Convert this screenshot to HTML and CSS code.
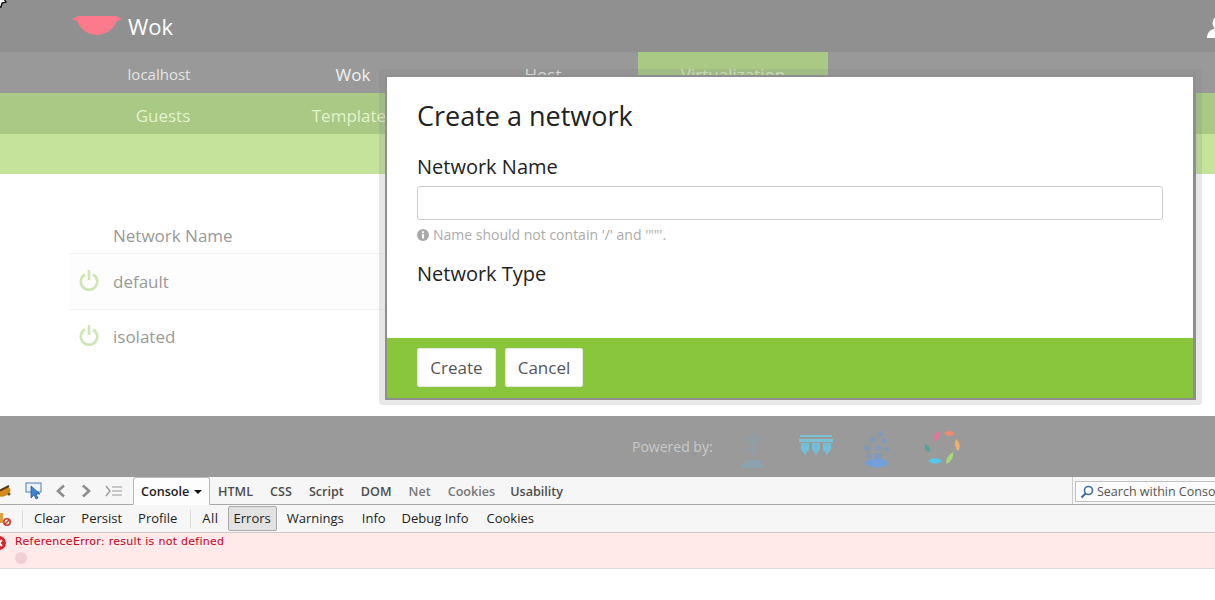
FILE: index.html
```html
<!DOCTYPE html>
<html lang="en">
<head>
<meta charset="utf-8">
<title>Wok</title>
<link rel="stylesheet" href="styles.css">
</head>
<body>
<div class="app">
  <header class="topbar">
    <svg class="logo" width="50" height="20" viewBox="0 0 50 20"><path d="M0 3 L6 0 H44 L50 3 L45 5 C41 14 33 19 25 19 C17 19 9 14 5 5 Z" fill="#fd7a8c"/></svg>
    <span class="brand">Wok</span>
    <svg class="user" width="30" height="24" viewBox="0 0 30 24"><circle cx="14" cy="8" r="7.5" fill="#fff"/><path d="M1 23 C1 16 6 13 14 13 C22 13 27 16 27 23 Z" fill="#fff"/></svg>
  </header>
  <nav class="nav1">
    <a class="n1">localhost</a><a class="n1 bright">Wok</a><a class="n1 wide">Host</a><a class="n1 active">Virtualization</a>
  </nav>
  <nav class="nav2">
    <a class="n2">Guests</a><a class="n2">Templates</a>
  </nav>
  <div class="band"></div>
  <main class="content">
    <div class="thead">Network Name</div>
    <div class="trow">
      <svg class="power" width="20" height="22" viewBox="0 0 20 22"><path d="M6 5.5 A8.2 8.2 0 1 0 14 5.5" fill="none" stroke="#cfe5b4" stroke-width="2.6"/><path d="M10 1 V11" stroke="#cfe5b4" stroke-width="2.6"/></svg>
      <span>default</span>
    </div>
    <div class="trow last">
      <svg class="power" width="20" height="22" viewBox="0 0 20 22"><path d="M6 5.5 A8.2 8.2 0 1 0 14 5.5" fill="none" stroke="#cfe5b4" stroke-width="2.6"/><path d="M10 1 V11" stroke="#cfe5b4" stroke-width="2.6"/></svg>
      <span>isolated</span>
    </div>
  </main>
  <footer class="foot">
    <span class="powered">Powered by:</span>
    <svg class="flogo l1" width="28" height="40" viewBox="0 0 28 40"><g fill="none" stroke="#8ba3ab" stroke-width="2.4"><path d="M14 2 V28 M7 7 L14 15 L21 7 M9 20 H19"/><path d="M3 37 H25 M6 33 H22" stroke="#85a6b8" stroke-width="3.4"/></g></svg>
    <svg class="flogo l2" width="36" height="22" viewBox="0 0 36 22"><path d="M2 1 H34 V3 H2 Z M1 5 H35 V8 H1 Z" fill="#79c1d4"/><path d="M3 9 H11 V15 L7 21 L3 15 Z M14 9 H22 V15 L18 21 L14 15 Z M25 9 H33 V15 L29 21 L25 15 Z" fill="#6fc0d8"/></svg>
    <svg class="flogo l3" width="30" height="38" viewBox="0 0 30 38"><g fill="#8199bd"><circle cx="20" cy="4" r="3"/><circle cx="12" cy="10" r="3"/><circle cx="23" cy="11" r="3"/><circle cx="6" cy="18" r="3"/><circle cx="17" cy="18" r="3"/><circle cx="26" cy="19" r="2.4"/><circle cx="8" cy="26" r="2.4"/><rect x="13" y="23" width="8" height="8"/><ellipse cx="16" cy="33" rx="11" ry="4.5" fill="#6f9fe0"/></g></svg>
    <svg class="flogo l4" width="36" height="36" viewBox="0 0 36 36"><path d="M15 1 C16 5 14 9 11 12 C9 8 11 3 15 1 Z" fill="#ef6f9d"/><path d="M20 3 C24 0 28 1 31 3 C28 7 23 7 20 3 Z" fill="#ee8a70"/><path d="M32 9 C36 12 37 17 34 21 C31 18 30 13 32 9 Z" fill="#eeb06a"/><path d="M29 22 C30 27 27 32 22 34 C22 29 24 25 29 22 Z" fill="#a5d877"/><path d="M18 31 C14 35 8 34 4 31 C8 27 14 27 18 31 Z" fill="#58c6e6"/><path d="M1 14 C5 15 7 19 6 22 C2 21 0 18 1 14 Z" fill="#4fa89e"/></svg>
  </footer>
</div>

<section class="modal">
  <div class="modal-inner">
    <div class="modal-body">
      <h1>Create a network</h1>
      <label class="lbl">Network Name</label>
      <div class="field"></div>
      <p class="hint"><svg width="12" height="12" viewBox="0 0 12 12"><circle cx="6" cy="6" r="6" fill="#a9a9a9"/><rect x="5" y="5" width="2" height="4.5" fill="#fff"/><rect x="5" y="2.3" width="2" height="1.7" fill="#fff"/></svg>Name should not contain '/' and '""'.</p>
      <label class="lbl type">Network Type</label>
    </div>
    <div class="modal-foot">
      <button class="btn">Create</button>
      <button class="btn">Cancel</button>
    </div>
  </div>
</section>

<section class="firebug">
  <div class="fb-tabs">
    <svg class="bug" width="14" height="14" viewBox="0 0 14 14"><ellipse cx="6" cy="8" rx="7" ry="4" transform="rotate(-25 6 8)" fill="#d08a1e"/><path d="M1 7 L11 2" stroke="#5a3410" stroke-width="2"/><circle cx="11" cy="10" r="1.5" fill="#7a4a10"/></svg>
    <svg class="ic inspect" width="18" height="18" viewBox="0 0 18 18"><rect x="1" y="1" width="15" height="9" fill="#eef3f9" stroke="#4d7fb3"/><path d="M6 4 L6 16 L9 13 L11 17 L13 16 L11 12 L15 12 Z" fill="#3c86d6" stroke="#1f4f8a" stroke-width=".7"/></svg>
    <svg class="ic prev" width="12" height="14" viewBox="0 0 12 14"><path d="M9 1.5 L3 7 L9 12.5" fill="none" stroke="#8d8d8d" stroke-width="2.6"/></svg>
    <svg class="ic next" width="12" height="14" viewBox="0 0 12 14"><path d="M3 1.5 L9 7 L3 12.5" fill="none" stroke="#8d8d8d" stroke-width="2.6"/></svg>
    <svg class="ic cmd" width="18" height="12" viewBox="0 0 18 12"><path d="M1 1 L5 6 L1 11" fill="none" stroke="#9a9a9a" stroke-width="1.4"/><path d="M7 2 H17 M7 6 H17 M7 10 H17" stroke="#9a9a9a" stroke-width="1.2"/></svg>
    <span class="tab-on">Console <i class="caret"></i></span>
    <span class="tab first">HTML</span><span class="tab">CSS</span><span class="tab">Script</span><span class="tab">DOM</span><span class="tab dim">Net</span><span class="tab dim">Cookies</span><span class="tab tail">Usability</span>
    <div class="searchwrap">
      <div class="search">
        <svg width="14" height="14" viewBox="0 0 14 14"><circle cx="8.5" cy="5.5" r="4" fill="none" stroke="#3f6f9f" stroke-width="1.6"/><path d="M5.5 8.5 L1.5 12.5" stroke="#3f6f9f" stroke-width="2.2"/></svg>
        <span>Search within Console panel</span>
      </div>
    </div>
  </div>
  <div class="fb-bar">
    <svg class="clearic" width="12" height="16" viewBox="0 0 12 16"><rect x="0" y="2" width="3" height="10" fill="#e0a040"/><circle cx="7" cy="11" r="3.2" fill="none" stroke="#d2382c" stroke-width="1.6"/><path d="M5 13 L9 9" stroke="#d2382c" stroke-width="1.2"/></svg>
    <i class="sep"></i>
    <span class="b">Clear</span><span class="b">Persist</span><span class="b">Profile</span>
    <i class="sep s2"></i>
    <span class="b all">All</span><span class="b on">Errors</span><span class="b wide">Warnings</span><span class="b">Info</span><span class="b wide">Debug Info</span><span class="b">Cookies</span>
  </div>
  <div class="fb-err">
    <svg class="x" width="14" height="14" viewBox="0 0 14 14"><circle cx="7" cy="7" r="7" fill="#d8232a"/><path d="M4 4 L10 10 M10 4 L4 10" stroke="#fff" stroke-width="2"/></svg>
    <div class="msg">
      <div class="errtxt">ReferenceError: result is not defined</div>
      <i class="dot"></i>
    </div>
  </div>
</section>
<svg class="cursor" width="8" height="9" viewBox="0 0 8 9"><path d="M0 0 H5 L7 3 L3 4 L2 8 L0 8 Z" fill="#fff" stroke="#111" stroke-width="1.4"/></svg>
</body>
</html>
```
FILE: styles.css
```css
* { box-sizing: border-box; }
html, body { margin: 0; height: 100%; overflow: hidden; background: #fff; }
body { position: relative; font-family: "Open Sans", "Liberation Sans", sans-serif; width: 1215px; height: 600px; }
.cursor { position: absolute; left: -1px; top: -1px; }
.app { display: flex; flex-direction: column; height: 477px; }
.topbar { height: 52px; flex: none; background: #909090; display: flex; align-items: center; padding-left: 72px; position: relative; }
.logo { flex: none; margin-right: 6px; }
.brand { color: #fff; font-size: 22px; line-height: 52px; }
.user { position: absolute; right: -21px; top: 15px; }
.nav1 { height: 41px; flex: none; background: #999; display: flex; padding-left: 64px; }
.n1 { width: 190px; text-align: center; font-size: 15px; line-height: 44px; color: #e4e4e4; }
.n1.bright { color: #f0f0f0; font-size: 17px; line-height: 45px; margin-left: 4px; }
.n1.wide { font-size: 17px; line-height: 45px; }
.n1.active { background: #a9c985; color: #dcebc8; font-size: 17px; line-height: 45px; }
.nav2 { height: 41px; flex: none; background: #a9c985; display: flex; padding-left: 68px; }
.n2 { width: 190px; text-align: center; font-size: 17px; line-height: 45px; color: #e3f3cd; }
.band { height: 40px; flex: none; background: #c6e39b; }
.content { flex: 1; background: #fff; padding: 44px 0 0 69px; color: #999; font-size: 17px; }
.thead { padding-left: 44px; height: 36px; line-height: 36px; border-bottom: 1px solid #f2f2f2; width: 320px; }
.trow { display: flex; align-items: center; height: 56px; width: 320px; border-bottom: 1px solid #f2f2f2; background: #fdfdfd; padding-left: 10px; }
.trow.last { border-bottom: 0; height: 52px; background: #fff; }
.trow span { margin-left: 14px; }
.power { flex: none; margin-top: -3px; }
.foot { height: 61px; flex: none; background: #9a9a9a; display: flex; align-items: center; padding-left: 632px; position: relative; }
.powered { color: #c8c8c8; font-size: 14px; margin-top: -1px; }
.flogo { flex: none; filter: blur(.6px); }
.l1 { margin-left: 26px; margin-top: 5px; opacity: .75; }
.l2 { margin-left: 31px; margin-top: -3px; }
.l3 { margin-left: 27px; margin-top: 5px; opacity: .9; }
.l4 { margin-left: 33px; margin-top: 3px; }
.modal { position: absolute; left: 379px; top: 69px; width: 823px; height: 336px; background: rgba(128, 128, 128, .18); border-radius: 4px; padding: 6px 6px 5px 6px; }
.modal-inner { height: 100%; border: 2px solid #8f8f8f; border-right-width: 3px; background: #fff; display: flex; flex-direction: column; }
.modal-body { flex: 1; padding: 0 30px; color: #222; }
h1 { margin: 0; font-weight: 400; font-size: 27px; line-height: 36px; padding-top: 21px; height: 70px; color: #222; }
.lbl { display: block; font-size: 20px; line-height: 27px; margin-top: 6px; }
.field { height: 34px; margin-top: 6px; border: 1px solid #ccc; border-radius: 3px; background: #fff; }
.hint { margin: 7px 0 0; color: #aaa; font-size: 14px; line-height: 16px; display: flex; align-items: center; gap: 4px; }
.lbl.type { margin-top: 17px; }
.modal-foot { height: 60px; flex: none; background: #8ac63c; display: flex; gap: 9px; padding: 10px 30px 0; align-items: flex-start; }
.btn { height: 39px; width: 79px; border: 1px solid #e6e6e6; border-radius: 2px; background: #fff; color: #555; font: 400 17px "Open Sans", sans-serif; padding: 0; }
.btn + .btn { width: 78px; }
.firebug { color: #222; }
.fb-tabs { height: 28px; background: #f6f6f6; border-bottom: 1px solid #aaa; display: flex; align-items: center; position: relative; font-size: 12.6px; font-weight: 600; }
.bug { margin-left: -2px; flex: none; }
.ic { flex: none; }
.inspect { margin-left: 13px; }
.prev { margin-left: 12px; }
.next { margin-left: 13px; }
.cmd { margin-left: 13px; margin-right: 10px; }
.tab-on { height: 28px; margin-top: 1px; width: 77px; flex: none; border: 1px solid #bbb; border-bottom: 1px solid #fdfdfd; border-radius: 3px 3px 0 0; background: #fdfdfd; line-height: 27px; padding-left: 7px; white-space: nowrap; color: #222; }
.caret { display: inline-block; width: 0; height: 0; border: 4px solid transparent; border-top-color: #111; border-bottom: 0; margin-left: 1px; vertical-align: 2px; }
.tab { margin-left: 17px; color: #4d4d4d; margin-top: 1px; }
.tab.first { margin-left: 8px; }
.tab.tail { margin-left: 15px; }
.tab.dim { color: #777; }
.searchwrap { position: absolute; left: 1072px; top: 0; height: 27px; width: 143px; border-left: 1px solid #ccc; padding: 4px 0 0 2px; overflow: hidden; }
.search { display: flex; height: 21px; width: 160px; border: 1px solid #c2c2c2; background: #fbfbfb; align-items: center; padding-left: 4px; }
.search span { font-weight: 400; font-size: 12.5px; color: #555; white-space: nowrap; margin-left: 3px; }
.search svg { flex: none; }
.fb-bar { height: 28px; background: #f6f6f6; border-bottom: 1px solid #ccc; display: flex; align-items: center; font-size: 13px; }
.clearic { flex: none; }
.sep { width: 1px; height: 18px; background: #ddd; margin: 0 3px 0 10px; flex: none; }
.sep.s2 { margin: 0 3px 0 5px; }
.b { padding: 0 7px; line-height: 23px; color: #222; border: 1px solid transparent; }
.b.all { margin-right: 2px; letter-spacing: .5px; padding-right: 6px; }
.b.on { background: #e2e2e2; border-color: #aaa; border-radius: 2px; padding: 0 5px; margin-right: 2px; }
.b.wide { margin-right: 2px; }
.fb-err { height: 36px; background: #ffe9e9; border-bottom: 1px solid #ddd; display: flex; position: relative; }
.x { position: absolute; left: -8px; top: 3px; }
.msg { padding: 2px 0 0 15px; }
.errtxt { font-family: "DejaVu Sans", sans-serif; font-size: 11px; line-height: 14px; color: #c4001a; letter-spacing: .28px; }
.dot { display: block; width: 12px; height: 12px; border-radius: 50%; background: #f2cfd2; margin-top: 3px; }
```
